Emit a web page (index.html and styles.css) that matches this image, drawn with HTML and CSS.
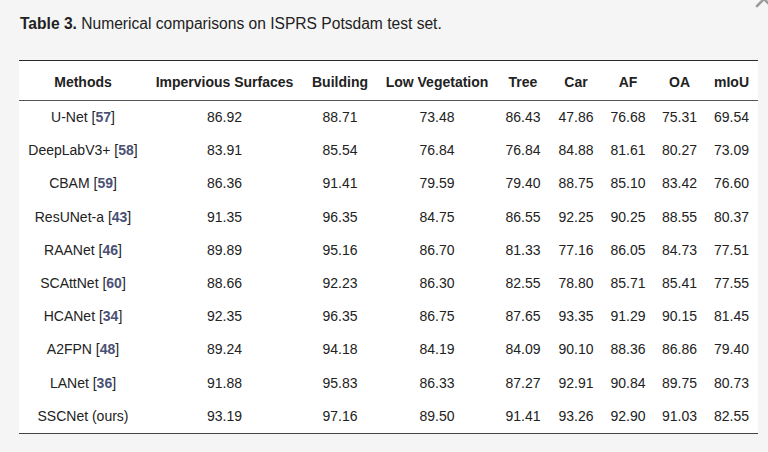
FILE: index.html
```html
<!DOCTYPE html>
<html lang="en">
<head>
<meta charset="utf-8">
<title>Table 3</title>
<link rel="stylesheet" href="styles.css">
</head>
<body>
<div class="page">
  <p class="caption"><b>Table 3.</b> Numerical comparisons on ISPRS Potsdam test set.</p>
  <table class="results">
    <colgroup>
      <col class="c1"><col class="c2"><col class="c3"><col class="c4"><col class="c5"><col class="c6"><col class="c7"><col class="c8"><col class="c9">
    </colgroup>
    <thead>
      <tr><th>Methods</th><th>Impervious Surfaces</th><th>Building</th><th>Low Vegetation</th><th>Tree</th><th>Car</th><th>AF</th><th>OA</th><th>mIoU</th></tr>
    </thead>
    <tbody>
      <tr><td>U-Net [<a class="ref">57</a>]</td><td>86.92</td><td>88.71</td><td>73.48</td><td>86.43</td><td>47.86</td><td>76.68</td><td>75.31</td><td>69.54</td></tr>
      <tr><td>DeepLabV3+ [<a class="ref">58</a>]</td><td>83.91</td><td>85.54</td><td>76.84</td><td>76.84</td><td>84.88</td><td>81.61</td><td>80.27</td><td>73.09</td></tr>
      <tr><td>CBAM [<a class="ref">59</a>]</td><td>86.36</td><td>91.41</td><td>79.59</td><td>79.40</td><td>88.75</td><td>85.10</td><td>83.42</td><td>76.60</td></tr>
      <tr><td>ResUNet-a [<a class="ref">43</a>]</td><td>91.35</td><td>96.35</td><td>84.75</td><td>86.55</td><td>92.25</td><td>90.25</td><td>88.55</td><td>80.37</td></tr>
      <tr><td>RAANet [<a class="ref">46</a>]</td><td>89.89</td><td>95.16</td><td>86.70</td><td>81.33</td><td>77.16</td><td>86.05</td><td>84.73</td><td>77.51</td></tr>
      <tr><td>SCAttNet [<a class="ref">60</a>]</td><td>88.66</td><td>92.23</td><td>86.30</td><td>82.55</td><td>78.80</td><td>85.71</td><td>85.41</td><td>77.55</td></tr>
      <tr><td>HCANet [<a class="ref">34</a>]</td><td>92.35</td><td>96.35</td><td>86.75</td><td>87.65</td><td>93.35</td><td>91.29</td><td>90.15</td><td>81.45</td></tr>
      <tr><td>A2FPN [<a class="ref">48</a>]</td><td>89.24</td><td>94.18</td><td>84.19</td><td>84.09</td><td>90.10</td><td>88.36</td><td>86.86</td><td>79.40</td></tr>
      <tr><td>LANet [<a class="ref">36</a>]</td><td>91.88</td><td>95.83</td><td>86.33</td><td>87.27</td><td>92.91</td><td>90.84</td><td>89.75</td><td>80.73</td></tr>
      <tr><td>SSCNet (ours)</td><td>93.19</td><td>97.16</td><td>89.50</td><td>91.41</td><td>93.26</td><td>92.90</td><td>91.03</td><td>82.55</td></tr>
    </tbody>
  </table>
</div>
<svg class="chevron" width="20" height="12" viewBox="0 0 20 12" aria-hidden="true">
  <path d="M3 10 L10 3 L17 10" fill="none" stroke="#9c9c9c" stroke-width="2.6" stroke-linecap="round" stroke-linejoin="round"/>
</svg>
</body>
</html>
```

FILE: styles.css
```css
html, body {
  margin: 0;
  padding: 0;
  background: #f5f5f5;
}
body {
  font-family: "Liberation Sans", Arial, Helvetica, sans-serif;
  color: #222;
  width: 768px;
  height: 452px;
  overflow: hidden;
  position: relative;
}
.page {
  padding: 14px 0 0 19px;
}
.caption {
  margin: 0 0 26px 1px;
  font-size: 15.6px;
  line-height: 20px;
  color: #222;
}
.caption b {
  font-weight: bold;
}
.results {
  border-collapse: separate;
  border-spacing: 0;
  table-layout: fixed;
  width: 739px;
  background: #fff;
  border-top: 1px solid #2a2a2a;
  border-bottom: 1px solid #444;
  font-size: 14px;
  color: #222;
}
.c1 { width: 128px; }
.c2 { width: 155px; }
.c3 { width: 76px; }
.c4 { width: 118px; }
.c5 { width: 54px; }
.c6 { width: 52px; }
.c7 { width: 52px; }
.c8 { width: 51px; }
.c9 { width: 53px; }
.results th {
  font-weight: bold;
  text-align: center;
  white-space: nowrap;
  padding: 13px 0 9px;
  line-height: 17px;
  border-bottom: 1px solid #555;
}
.results td {
  text-align: center;
  white-space: nowrap;
  padding: 0;
  height: 33.2px;
  line-height: 17px;
  vertical-align: middle;
}
.ref {
  color: #4b5174;
  font-weight: bold;
}
.chevron {
  position: absolute;
  top: -4px;
  right: -6px;
}
```
